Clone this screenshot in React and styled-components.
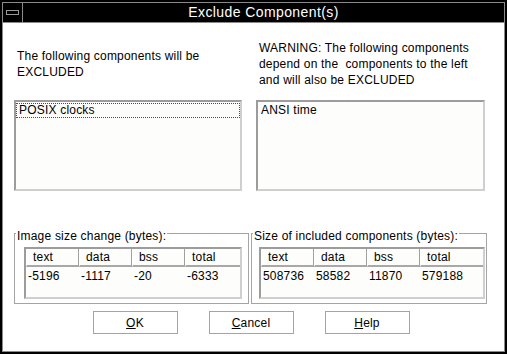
import React from "react";
import styled, { createGlobalStyle } from "styled-components";

const Global = createGlobalStyle`
  html, body { margin: 0; padding: 0; background: #000; }
  body {
    font-family: "Liberation Sans", Arial, Helvetica, sans-serif;
    font-size: 12px;
    letter-spacing: 0.2px;
    color: #000;
  }
`;

const Window = styled.div`
  width: 507px;
  height: 354px;
  box-sizing: border-box;
  padding: 2px;
  background: #000;
  display: flex;
`;

const Frame = styled.div`
  flex: 1;
  border: 1px solid #8a8a8a;
  background: #fff;
  display: flex;
  flex-direction: column;
`;

const TitleBar = styled.div`
  height: 19px;
  border-bottom: 1px solid #8a8a8a;
  background: #000;
  display: flex;
`;

const MenuButton = styled.div`
  width: 19px;
  border-right: 1px solid #8a8a8a;
  display: flex;
  align-items: center;
  justify-content: center;
`;

const MenuBar = styled.div`
  width: 11px;
  height: 3px;
  border: 1px solid #9a9a9a;
`;

const Title = styled.div`
  flex: 1;
  color: #fff;
  text-align: center;
  font-size: 14px;
  letter-spacing: 0.4px;
  line-height: 19px;
`;

const Content = styled.div`
  flex: 1;
  display: flex;
  flex-direction: column;
  padding: 17px 16px 0 11px;
`;

const TopRow = styled.div`
  display: grid;
  grid-template-columns: 228px 229px;
  column-gap: 14px;
`;

const Column = styled.div`
  display: flex;
  flex-direction: column;
`;

const Label = styled.div`
  height: 48px;
  display: flex;
  flex-direction: column;
  justify-content: center;
  line-height: 16px;
  padding-left: 3px;
  white-space: pre;
`;

const ListBox = styled.div`
  margin-top: 12px;
  height: 91px;
  box-sizing: border-box;
  border: 2px solid;
  border-color: #9c9c9c #cfcfcf #cfcfcf #9c9c9c;
  background: #fdfdfb;
  padding: 1px 0;
`;

const ListItem = styled.div`
  line-height: 13px;
  border: 1px dotted ${(p) => (p.$focused ? "#1b6e1b" : "transparent")};
  padding: 0 2px;
`;

const GroupRow = styled.div`
  margin-top: 42px;
  display: grid;
  grid-template-columns: 235px 236px;
  column-gap: 2px;
`;

const Group = styled.div`
  height: 71px;
  box-sizing: border-box;
  border: 1px solid #a4a4a4;
`;

const Caption = styled.div`
  width: fit-content;
  margin: -5px 0 0 1px;
  padding: 0 1px;
  background: #fff;
  line-height: 14px;
`;

const Table = styled.div`
  margin-top: 4px;
  margin-left: ${(p) => p.$ml}px;
  width: ${(p) => p.$w}px;
  height: 52px;
  box-sizing: border-box;
  border: 2px solid;
  border-color: #9c9c9c #cfcfcf #cfcfcf #9c9c9c;
  background: #fdfdfb;
  display: grid;
  grid-template-columns: 53px 53px 53px 1fr;
  align-content: start;
`;

const HeadCell = styled.div`
  height: 18px;
  box-sizing: border-box;
  padding: 1px 0 0 6px;
  line-height: 15px;
  border-bottom: 2px solid #a8a8a8;
  border-left: 1px solid #fff;
  border-right: ${(p) => (p.$last ? "none" : "1px solid #a0a0a0")};
`;

const DataCell = styled.div`
  padding: 1px 0 0 2px;
  line-height: 16px;
  white-space: pre;
`;

const ButtonRow = styled.div`
  margin-top: 7px;
  display: flex;
  justify-content: center;
  gap: 31px;
`;

const Button = styled.button`
  width: 85px;
  height: 23px;
  box-sizing: border-box;
  border: 1px solid #a4a4a4;
  background: #fff;
  font-family: inherit;
  font-size: 12px;
  letter-spacing: 0.2px;
  color: #000;
  padding: 0;
  text-align: center;
`;

const SizeTable = ({ values, w, ml }) => (
  <Table $w={w} $ml={ml}>
    {["text", "data", "bss", "total"].map((h, i) => (
      <HeadCell key={h} $last={i === 3}>
        {h}
      </HeadCell>
    ))}
    {values.map((v, i) => (
      <DataCell key={i}>{v}</DataCell>
    ))}
  </Table>
);

export default function App() {
  return (
    <>
      <Global />
      <Window>
        <Frame>
          <TitleBar>
            <MenuButton>
              <MenuBar />
            </MenuButton>
            <Title>Exclude Component(s)</Title>
          </TitleBar>
          <Content>
            <TopRow>
              <Column>
                <Label>
                  <span>The following components will be</span>
                  <span>EXCLUDED</span>
                </Label>
                <ListBox>
                  <ListItem $focused>POSIX clocks</ListItem>
                </ListBox>
              </Column>
              <Column>
                <Label>
                  <span>WARNING: The following components</span>
                  <span>depend on the  components to the left</span>
                  <span>and will also be EXCLUDED</span>
                </Label>
                <ListBox>
                  <ListItem>ANSI time</ListItem>
                </ListBox>
              </Column>
            </TopRow>
            <GroupRow>
              <Group>
                <Caption>Image size change (bytes):</Caption>
                <SizeTable values={["-5196", "-1117", "-20", "-6333"]} w={218} ml={9} />
              </Group>
              <Group>
                <Caption>Size of included components (bytes):</Caption>
                <SizeTable values={["508736", "58582", "11870", "579188"]} w={226} ml={7} />
              </Group>
            </GroupRow>
            <ButtonRow>
              <Button>
                <u>O</u>K
              </Button>
              <Button>
                <u>C</u>ancel
              </Button>
              <Button>
                <u>H</u>elp
              </Button>
            </ButtonRow>
          </Content>
        </Frame>
      </Window>
    </>
  );
}
